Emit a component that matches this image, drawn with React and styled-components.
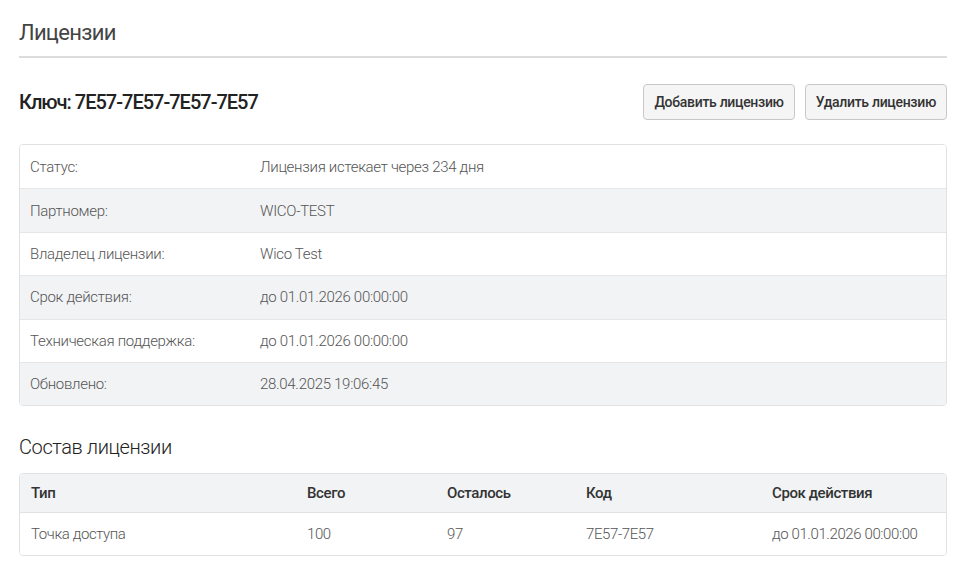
import React from 'react'
import styled, { createGlobalStyle } from 'styled-components'

const GlobalStyle = createGlobalStyle`
  body {
    margin: 0;
    background: #fff;
    font-family: Roboto, "Liberation Sans", sans-serif;
    color: #333;
  }
`

const Page = styled.div`
  padding: 20px 14px 0 19px;
`

const PageTitle = styled.h1`
  margin: 0;
  padding-bottom: 10px;
  border-bottom: 2px solid #dcdcdc;
  font-size: 22px;
  font-weight: 400;
  color: #444;
  line-height: 26px;
  letter-spacing: -0.7px;
`

const KeyBar = styled.div`
  display: flex;
  align-items: center;
  justify-content: space-between;
  margin-top: 26px;
`

const KeyTitle = styled.h2`
  margin: 0;
  font-size: 20px;
  font-weight: 500;
  color: #222;
  letter-spacing: -1px;
`

const Actions = styled.div`
  display: flex;
  gap: 10px;
`

const Button = styled.button`
  height: 36px;
  padding: 0 10px;
  border: 1px solid #c8c8c8;
  border-radius: 4px;
  background: #f5f5f5;
  font-family: inherit;
  font-size: 14px;
  font-weight: 500;
  color: #333;
  letter-spacing: -0.3px;
`

const Card = styled.div`
  margin-top: 24px;
  border: 1px solid #e2e2e2;
  border-radius: 4px;
  overflow: hidden;
`

const InfoRow = styled.div`
  display: grid;
  grid-template-columns: 230px 1fr;
  align-items: center;
  height: 43.4px;
  padding: 0 10px;
  background: ${p => (p.$shaded ? '#f2f3f5' : '#fff')};
  border-top: ${p => (p.$first ? 'none' : '1px solid #e6e6e6')};
  box-sizing: border-box;
  font-size: 15px;
  font-weight: 300;
  color: #555;
  letter-spacing: -0.3px;
`

const SectionTitle = styled.h3`
  margin: 29px 0 0;
  font-size: 20px;
  font-weight: 300;
  color: #222;
  letter-spacing: -0.4px;
`

const Table = styled(Card)`
  margin-top: 14px;
`

const TableRow = styled.div`
  display: grid;
  grid-template-columns: 276px 140px 139px 186px 1fr;
  align-items: center;
  height: ${p => (p.$head ? '38px' : '43px')};
  background: ${p => (p.$head ? '#f2f3f5' : '#fff')};
  border-top: ${p => (p.$head ? 'none' : '1px solid #e2e2e2')};
  box-sizing: border-box;
  font-size: 15px;
  font-weight: ${p => (p.$head ? 500 : 300)};
  color: ${p => (p.$head ? '#333' : '#555')};
  letter-spacing: -0.4px;
`

const Cell = styled.div`
  padding: 0 11px;
`

const info = [
  ['Статус:', 'Лицензия истекает через 234 дня'],
  ['Партномер:', 'WICO-TEST'],
  ['Владелец лицензии:', 'Wico Test'],
  ['Срок действия:', 'до 01.01.2026 00:00:00'],
  ['Техническая поддержка:', 'до 01.01.2026 00:00:00'],
  ['Обновлено:', '28.04.2025 19:06:45'],
]

const columns = ['Тип', 'Всего', 'Осталось', 'Код', 'Срок действия']
const rows = [['Точка доступа', '100', '97', '7E57-7E57', 'до 01.01.2026 00:00:00']]

const App = () => (
  <Page>
    <GlobalStyle />
    <PageTitle>Лицензии</PageTitle>
    <KeyBar>
      <KeyTitle>Ключ: 7E57-7E57-7E57-7E57</KeyTitle>
      <Actions>
        <Button>Добавить лицензию</Button>
        <Button>Удалить лицензию</Button>
      </Actions>
    </KeyBar>
    <Card>
      {info.map(([label, value], i) => (
        <InfoRow key={label} $shaded={i % 2 === 1} $first={i === 0}>
          <span>{label}</span>
          <span>{value}</span>
        </InfoRow>
      ))}
    </Card>
    <SectionTitle>Состав лицензии</SectionTitle>
    <Table>
      <TableRow $head>
        {columns.map(c => (
          <Cell key={c}>{c}</Cell>
        ))}
      </TableRow>
      {rows.map(r => (
        <TableRow key={r[0]}>
          {r.map((c, i) => (
            <Cell key={i}>{c}</Cell>
          ))}
        </TableRow>
      ))}
    </Table>
  </Page>
)

export default App
